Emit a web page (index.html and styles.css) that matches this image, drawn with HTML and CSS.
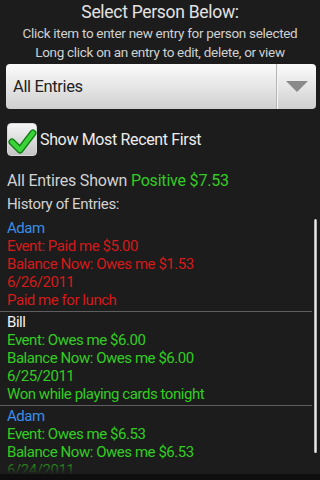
FILE: index.html
```html
<!DOCTYPE html>
<html>
<head>
  <title>Balance Tracker</title>
  <link rel="stylesheet" href="styles.css">
</head>
<body>
  <div class="screen">
    <div class="header">
      <div class="title">Select Person Below:</div>
      <div class="hint">Click item to enter new entry for person selected</div>
      <div class="hint">Long click on an entry to edit, delete, or view</div>
    </div>

    <div class="spinner">
      <div class="spinner-text">All Entries</div>
      <div class="spinner-arrow">
        <svg width="22" height="11" viewBox="0 0 22 11">
          <polygon points="0,0 22,0 11,11" fill="#8a8a8a"/>
        </svg>
      </div>
    </div>

    <div class="check-row">
      <div class="checkbox">
        <svg width="30" height="33" viewBox="0 0 30 33">
          <path d="M5 19 L13 27 L26 10" fill="none" stroke="#127a12" stroke-width="7" stroke-linecap="round" stroke-linejoin="round"/>
          <path d="M5 19 L13 27 L26 10" fill="none" stroke="#3ad43a" stroke-width="4.5" stroke-linecap="round" stroke-linejoin="round"/>
        </svg>
      </div>
      <span>Show Most Recent First</span>
    </div>

    <div class="summary">All Entires Shown <span class="green">Positive $7.53</span></div>
    <div class="history">History of Entries:</div>

    <div class="list-wrap">
      <div class="list">
        <div class="entry">
          <div class="name blue">Adam</div>
          <div class="red">Event: Paid me $5.00</div>
          <div class="red">Balance Now: Owes me $1.53</div>
          <div class="red">6/26/2011</div>
          <div class="red">Paid me for lunch</div>
        </div>
        <div class="entry">
          <div class="name white">Bill</div>
          <div class="green">Event: Owes me $6.00</div>
          <div class="green">Balance Now: Owes me $6.00</div>
          <div class="green">6/25/2011</div>
          <div class="green">Won while playing cards tonight</div>
        </div>
        <div class="entry">
          <div class="name blue">Adam</div>
          <div class="green">Event: Owes me $6.53</div>
          <div class="green">Balance Now: Owes me $6.53</div>
          <div class="green">6/24/2011</div>
          <div class="green">Owed me from lunch</div>
        </div>
        <div class="fade"></div>
      </div>
      <div class="scrollbar"><div class="thumb"></div></div>
    </div>
  </div>
</body>
</html>
```

FILE: styles.css
```css
html, body {
  margin: 0;
  height: 100%;
  background-color: #0e0e0e;
}

.screen {
  height: 474px;
  background-color: #1c1c1c;
  font-family: Roboto, "Noto Sans", sans-serif;
  color: #d2d2d2;
  display: flex;
  flex-direction: column;
  overflow: hidden;
}

.header {
  text-align: center;
}

.title {
  font-size: 17.5px;
  letter-spacing: -0.3px;
  line-height: 24px;
  color: #e2e2e2;
}

.hint {
  font-size: 13.5px;
  letter-spacing: -0.3px;
  line-height: 19px;
  color: #d0d0d0;
}

.spinner {
  margin: 2px 4px 0 6px;
  height: 45px;
  border-radius: 4px;
  background: linear-gradient(#fbfbfb, #e6e6e6 50%, #cfcfcf);
  display: flex;
  align-items: center;
}

.spinner-text {
  flex: 1;
  padding-left: 7px;
  font-size: 16.5px;
  letter-spacing: -0.35px;
  color: #222;
}

.spinner-arrow {
  width: 39px;
  height: 100%;
  border-left: 1px solid #b5b5b5;
  box-shadow: inset 1px 0 0 #f4f4f4;
  display: flex;
  align-items: center;
  justify-content: center;
}

.check-row {
  margin: 14px 0 0 7px;
  display: flex;
  align-items: center;
  font-size: 16px;
  letter-spacing: -0.35px;
  color: #ededed;
}

.checkbox {
  width: 30px;
  height: 33px;
  margin-right: 3px;
  border-radius: 4px;
  box-sizing: border-box;
  border: 1px solid #d8d8d8;
  background: linear-gradient(#f6f6f6, #c4c4c4);
}

.checkbox svg {
  display: block;
  margin: -1px;
}

.summary {
  margin: 13px 0 0 7px;
  font-size: 16px;
  letter-spacing: -0.2px;
  line-height: 24px;
}

.history {
  margin-left: 7px;
  font-size: 15px;
  letter-spacing: -0.35px;
  line-height: 22px;
}

.green {
  color: #33cc22;
}

.red {
  color: #d41a1a;
}

.blue {
  color: #3a8ee6;
}

.white {
  color: #f2f2f2;
}

.list-wrap {
  flex: 1;
  margin-top: 3px;
  display: flex;
  position: relative;
  overflow: hidden;
}

.list {
  flex: 1;
  overflow: hidden;
}

.entry {
  padding: 1px 0 2px 7px;
  font-size: 15px;
  letter-spacing: -0.45px;
  line-height: 18px;
  border-bottom: 1px solid #5e5e5e;
  margin-right: 1px;
}

.fade {
  position: absolute;
  left: 0;
  right: 0;
  bottom: 0;
  height: 16px;
  background: linear-gradient(rgba(28, 28, 28, 0), #1c1c1c);
}

.scrollbar {
  width: 7px;
  padding-top: 1px;
}

.thumb {
  width: 3px;
  height: 234px;
  margin-left: 1px;
  border-radius: 2px;
  background: linear-gradient(90deg, #9a9a9a, #e8e8e8, #9a9a9a);
}
```
